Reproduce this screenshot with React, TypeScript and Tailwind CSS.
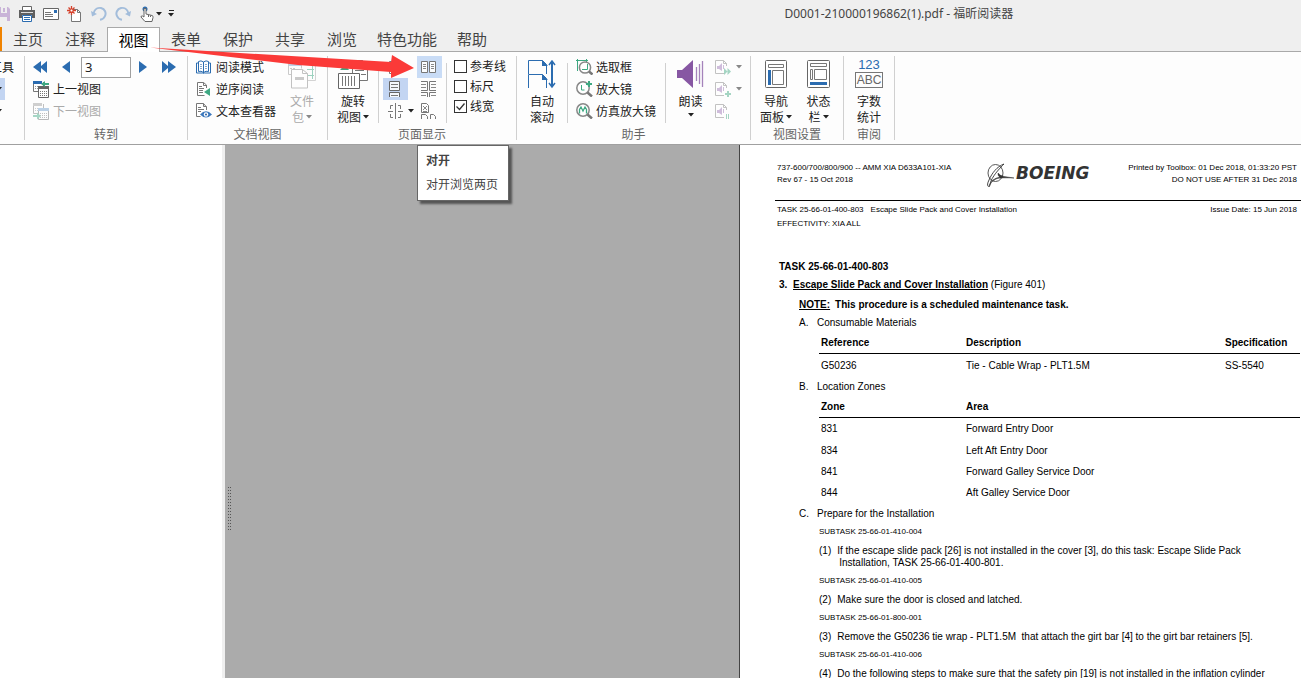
import type { ReactNode } from "react";

type Box = { children: ReactNode; w: number; h: number; className?: string };

function Icon({ children, w, h, className = "" }: Box) {
  return (
    <svg
      width={w}
      height={h}
      viewBox={`0 0 ${w} ${h}`}
      fill="none"
      aria-hidden="true"
      className={`shrink-0 ${className}`}
    >
      {children}
    </svg>
  );
}

function Caret({ className = "text-[#222]" }: { className?: string }) {
  return (
    <Icon w={6} h={4} className={className}>
      <path d="M0 0h6L3 3.6z" fill="currentColor" />
    </Icon>
  );
}

/* ---------- quick access bar ---------- */

const SaveIcon = () => (
  <Icon w={10} h={16}>
    <path d="M0 1h8l2 2v12H0z" fill="#c9b4d8" />
    <path d="M0 1h7v6H0zM0 10h7v5H0z" fill="#efefef" />
    <path d="M0 1h1v6H0zM3 2h2v4H3zM0 10h7v1H0z" fill="#c9b4d8" />
  </Icon>
);

const PrintIcon = () => (
  <Icon w={16} h={16}>
    <path d="M3.500 4V.5h9V4" stroke="#666" fill="#fff" />
    <path d="M0 4h16v8h-3V9H3v3H0z" fill="#606060" />
    <path d="M2 6h12v1H2z" fill="#ddd" />
    <path d="M3.500 9.500h9v6h-9z" fill="#fff" stroke="#2b6cb0" />
    <path d="M5 11.500h6M5 13.500h6" stroke="#2b6cb0" />
  </Icon>
);

const MailIcon = () => (
  <Icon w={16} h={12}>
    <path d="M.5.5h15v11H.5z" fill="#fff" stroke="#666" />
    <path d="M11 2h3v3h-3z" fill="#2b6cb0" />
    <path d="M2 4.500h6M2 6.500h8M2 8.500h8" stroke="#777" />
  </Icon>
);

const NewIcon = () => (
  <Icon w={15} h={16}>
    <path d="M4.500 3.500h6l3 3v9h-9z" fill="#fff" stroke="#777" />
    <path d="M10.500 3.500v3h3" stroke="#777" />
    <path d="M4.500 0v9M0 4.500h9M1.500 1.500l6 6M7.500 1.500l-6 6" stroke="#d5412b" strokeWidth="1.300" />
    <circle cx="4.500" cy="4.500" r="1.500" fill="#fff" stroke="#d5412b" />
  </Icon>
);

const UndoIcon = ({ className = "" }: { className?: string }) => (
  <Icon w={16} h={15} className={className}>
    <path d="M2.500 7.500C3.500 3 7 1.500 10 2c4 1 5.500 5 4 8-1 2.500-3 3.500-5 3.700" stroke="#a3bddb" strokeWidth="2" />
    <path d="M0 5l1 5.500L6 8z" fill="#a3bddb" />
  </Icon>
);

const HandIcon = () => (
  <Icon w={14} h={16}>
    <circle cx="5" cy="3" r="2.500" fill="#2b6cb0" />
    <path d="M4 2.500h2V8l6 1.500q1.500.5 1 2L12 15.500H5L1 11q0-1.500 1.500-1L4 11z" fill="#fff" stroke="#666" />
    <path d="M8.500 9v2M10.500 9.500V11" stroke="#666" />
  </Icon>
);

/* ---------- ribbon icons ---------- */

const TriIcon = ({ double = false, className = "" }: { double?: boolean; className?: string }) => (
  <Icon w={double ? 14 : 8} h={12} className={className}>
    <path d={double ? "M0 0l6 5V0l8 6-8 6V7l-6 5z" : "M0 0l8 6-8 6z"} fill="#2b6cb0" />
  </Icon>
);

const ViewSheets = ({ next = false }: { next?: boolean }) => (
  <Icon w={16} h={17} className={next ? "opacity-45" : ""}>
    <path d="M.5 1v9.500h10V1" fill="#fff" stroke="#777" />
    <path d="M0 0h9v3H0z" fill={next ? "#999" : "#2b6cb0"} />
    <path d="M2 5.500h7M2 7.500h7" stroke="#999" strokeDasharray="1 1" />
    <path d="M5.500 6v10.500h10V6" fill="#fff" stroke="#666" />
    <path d="M5 5h11v3H5z" fill={next ? "#6d9ccd" : "#666"} />
    <path d="M7 10.500h7M7 12.500h7M7 14.500h7" stroke="#777" strokeDasharray="1 1" />
    {next ? (
      <path d="M0 12h4V9.500l4 3.500-4 3.500V14H0z" fill="#3ea882" />
    ) : (
      <path d="M16 2h-4V0L8 3l4 3V4h4z" fill="#3ea882" />
    )}
  </Icon>
);

const BookIcon = () => (
  <Icon w={16} h={14}>
    <path d="M7.500 2Q5 0 2.500 1.500v10Q5 10.500 7.500 12.500 10 10.500 12.500 11.500v-10Q10 0 7.500 2z" fill="#fff" stroke="#2b6cb0" />
    <path d="M7.500 2v11M2 3H.5v10h6l1 .5 1-.5h6V3H13" stroke="#2b6cb0" />
    <path d="M4 4.500h2M4 6.500h2M4 8.500h2M9 4.500h2M9 6.500h2M9 8.500h2" stroke="#88a9cc" />
  </Icon>
);

const ReverseIcon = () => (
  <Icon w={15} h={16}>
    <path d="M10.500 7V4L7.500 1.500h-6v13h7" fill="#fff" stroke="#777" />
    <path d="M7.500 1.500v3h3M3 5.500h3M3 7.500h5M3 9.500h4M3 11.500h4" stroke="#777" />
    <path d="M14 7v8l-6-4z" fill="#3ea882" />
  </Icon>
);

const ViewerIcon = () => (
  <Icon w={16} h={16}>
    <path d="M10.500 7V4L7.500.5h-7v13h4" fill="#fff" stroke="#777" />
    <path d="M7.500.5v3h3M2 4.500h3M2 6.500h6M2 8.500h3" stroke="#777" />
    <path d="M4 11.500q6-6.500 12 0-6 6-12 0z" fill="#3b78bd" />
    <circle cx="10" cy="11.500" r="2.200" fill="#fff" />
    <circle cx="10" cy="11.500" r="1" fill="#2b5f9e" />
  </Icon>
);

const PortfolioIcon = () => (
  <Icon w={28} h={29} className="opacity-50">
    <path d="M.5 2v12.500h8M.5 2.500h13v6" stroke="#999" />
    <path d="M1 4h12v2H1z" fill="#7fa8d4" />
    <path d="M2 8.500h6" stroke="#999" strokeDasharray="2 1" />
    <path d="M12 1.500h15.500v19H20" stroke="#aaa" />
    <path d="M19 9.500h7M24.500 3v16M19 15.500h7" stroke="#3ea882" />
    <path d="M3.500 9.500h11l5 4v14.500h-16z" fill="#fff" stroke="#888" />
    <path d="M14.500 9.500v4h5" stroke="#888" />
    <path d="M7 17h9v3H7z" fill="#999" />
  </Icon>
);

const RotateIcon = () => (
  <Icon w={30} h={30}>
    <path d="M14.500.5h10l5 5v15h-15z" fill="#fff" stroke="#777" />
    <path d="M24.500.5v5h5M17 10.500h9M23 14.500h5" stroke="#777" />
    <path d="M2 10h9L7 4.500z" fill="#3ea882" />
    <path d="M.5 13.500h21v15H.5z" fill="#fff" stroke="#666" />
    <path d="M4.500 16v10M7.500 16v10M10.500 16v10M13.500 16v10M16.500 16v10" stroke="#777" />
  </Icon>
);

const SinglePage = () => (
  <Icon w={13} h={16}>
    <path d="M.5 2.500h10v12H.5z" fill="#fff" stroke="#777" />
    <path d="M3 6.500h5M3 9.500h5" stroke="#999" />
  </Icon>
);

const ScrollPage = () => (
  <Icon w={13} h={16}>
    <path d="M.5.5h10v9H.5zM.5 16v-4.500h10V16" fill="#f4f7fc" stroke="#666" />
    <path d="M2 3.500h7M2 6.500h7M2 14.500h7" stroke="#777" />
  </Icon>
);

const SplitPage = () => (
  <Icon w={15} h={16}>
    <path d="M5 2.500H2.500V6M10 2.500h2.500V6M5 14.500H2.500V11M10 14.500h2.500V11M7.500 0v16M0 8.500h5M10 8.500h5" stroke="#777" />
  </Icon>
);

const FacingIcon = () => (
  <Icon w={17} h={12}>
    <path d="M.5.5h6v11h-6zM8.500.5h6v11h-6z" fill="#fbfdff" stroke="#777" />
    <path d="M2 3.500h3M2 5.500h3M2 7.500h3M10 3.500h3M10 5.500h3M10 7.500h3" stroke="#888" />
  </Icon>
);

const FacingScroll = () => (
  <Icon w={17} h={16}>
    <path d="M0 .5h6.500v9H0M15 .5H8.500v9H15M0 11.500h6.500V16M15 11.500H8.500V16" stroke="#777" />
    <path d="M0 3.500h5M0 6.500h5M10 3.500h5M10 6.500h5M0 14.500h5M10 14.500h5" stroke="#888" />
  </Icon>
);

const CoverFacing = () => (
  <Icon w={17} h={16}>
    <path d="M.5 9.500v-9h5l2 2v7zM.5 16v-4.500h4l2 2V16M9.500 16v-4.500h3l2 2V16" stroke="#777" />
    <path d="M2 3l4 4M6 3L2 7M2 8.500h4" stroke="#888" />
  </Icon>
);

const AutoScroll = () => (
  <Icon w={28} h={29}>
    <path d="M.5 14V.5h14l4 4V14M.5 28V14.500h14l4 4V28" stroke="#2b6cb0" />
    <path d="M14 0v6h6zM14 14v6h6z" fill="#2b6cb0" />
    <path d="M24 2v24" stroke="#2b6cb0" strokeWidth="2" />
    <path d="M21 5l3-4 3 4M21 23l3 4 3-4" stroke="#2b6cb0" strokeWidth="1.500" />
  </Icon>
);

const Lens = ({ children }: { children: ReactNode }) => (
  <Icon w={17} h={16}>
    <circle cx="7" cy="7" r="6.200" fill="#fff" stroke="#888" strokeWidth="1.500" />
    <path d="M11.500 11.500l4.500 4" stroke="#777" strokeWidth="2.500" />
    {children}
  </Icon>
);

const MarqueeIcon = () => (
  <Icon w={17} h={16}>
    <path d="M1.500 0v12M0 1.500h12M10.500 0v3" stroke="#3ea882" />
    <circle cx="9" cy="8.500" r="5.600" fill="#fff" stroke="#888" strokeWidth="1.500" />
    <path d="M6 10.500h5.500V5" stroke="#3ea882" />
    <path d="M13 12.500l3.500 3" stroke="#777" strokeWidth="2.500" />
  </Icon>
);

const SpeakerIcon = () => (
  <Icon w={27} h={28}>
    <path d="M0 10h5L16 0v28L5 18H0z" fill="#8757a3" />
    <path d="M19.500 7v14M22.500 4v20M25.500 1v26" stroke="#a583bb" strokeWidth="1.300" />
  </Icon>
);

const SpeakFile = ({ kind }: { kind: "forward" | "plus" | "pause" }) => (
  <Icon w={16} h={15} className="opacity-50">
    <path d="M11.500 6V3.500L8.500.5h-8v13H9" fill="#fff" stroke="#888" />
    <path d="M8.500.5v3h3" stroke="#888" />
    <path d="M2 6h2l3-3v8L4 9H2z" fill="#a37fba" />
    <path d="M8.500 5v4" stroke="#a37fba" />
    {kind === "forward" && <path d="M9 8l3.500 3.500L9 15zM12.500 8l3.500 3.500-3.500 3.500z" fill="#4fae8b" />}
    {kind === "plus" && <path d="M10 12h6M13 9v6" stroke="#4fae8b" strokeWidth="2" />}
    {kind === "pause" && <path d="M11.500 10v5M13.500 10v5" stroke="#4fae8b" />}
  </Icon>
);

const NavPanel = () => (
  <Icon w={22} h={28}>
    <rect x=".5" y=".5" width="21" height="27" rx="1" fill="#fff" stroke="#666" />
    <path d="M3.500 4.500h15v3h-15zM7.500 10.500h11v14h-11z" stroke="#777" />
    <path d="M3 10h3v15H3z" fill="#2b6cb0" />
  </Icon>
);

const StatusPanel = () => (
  <Icon w={23} h={28}>
    <rect x=".5" y=".5" width="22" height="27" rx="1" fill="#fff" stroke="#666" />
    <path d="M3.500 3.500h16v3h-16zM3.500 9.500h2v10h-2zM7.500 9.500h12v10h-12z" stroke="#777" />
    <path d="M3 22h17v3H3z" fill="#2b6cb0" />
  </Icon>
);

/* ---------- ribbon building blocks ---------- */

function Group({ label, className = "", children }: { label: string; className?: string; children: ReactNode }) {
  return (
    <section aria-label={label} className={`flex shrink-0 flex-col ${className}`}>
      <div className="flex h-[70px]">{children}</div>
      <div className="h-4 text-center text-xs leading-4 text-[#666]">{label}</div>
    </section>
  );
}

const GroupRule = () => <div className="h-[84px] w-px shrink-0 bg-[#d0d0d0]" />;
const Rule = () => <div className="mt-[7px] h-[60px] w-px shrink-0 bg-[#d0d0d0]" />;

function SmallButton({ icon, children, disabled = false }: { icon: ReactNode; children: ReactNode; disabled?: boolean }) {
  return (
    <button
      type="button"
      disabled={disabled}
      className="flex h-[22px] items-center gap-[3px] text-xs whitespace-nowrap text-[#222] disabled:text-[#aaa]"
    >
      <span className="flex w-[17px]">{icon}</span>
      {children}
    </button>
  );
}

function BigButton({
  icon,
  lines,
  caret = false,
  disabled = false,
  className = "",
}: {
  icon: ReactNode;
  lines: string[];
  caret?: boolean;
  disabled?: boolean;
  className?: string;
}) {
  return (
    <button
      type="button"
      disabled={disabled}
      className={`flex flex-col items-center pt-1 text-xs leading-4 text-[#222] disabled:text-[#aaa] ${className}`}
    >
      <span className="flex h-[33px] items-start">{icon}</span>
      {lines.map((line, i) => (
        <span key={line} className="flex h-4 items-center gap-0.5">
          {line}
          {caret && i === lines.length - 1 && (
            <Caret className={disabled ? "text-[#888]" : "text-[#222]"} />
          )}
        </span>
      ))}
    </button>
  );
}

function PageMode({ label, tone = "", children }: { label: string; tone?: string; children: ReactNode }) {
  return (
    <button type="button" aria-label={label} className={`flex h-[22px] w-[25px] items-center justify-center ${tone}`}>
      {children}
    </button>
  );
}

function Check({ label, checked = false }: { label: string; checked?: boolean }) {
  return (
    <label className="flex h-5 items-center gap-[3px] text-xs text-[#222]">
      <span className="relative flex">
        <input
          type="checkbox"
          defaultChecked={checked}
          className="peer size-[13px] appearance-none border border-[#333] bg-white"
        />
        <svg
          viewBox="0 0 13 13"
          fill="none"
          aria-hidden="true"
          className="pointer-events-none absolute inset-0 hidden size-[13px] peer-checked:block"
        >
          <path d="M2.500 6.500l3 3 5-6" stroke="#333" strokeWidth="1.300" />
        </svg>
      </span>
      {label}
    </label>
  );
}

/* ---------- header ---------- */

const tabs = ["主页", "注释", "视图", "表单", "保护", "共享", "浏览", "特色功能", "帮助"];

function TitleBar() {
  return (
    <div className="relative flex h-[27px] items-center text-xs text-[#444]">
      <div className="flex items-center">
        <button type="button" aria-label="保存" className="w-[19px]"><SaveIcon /></button>
        <button type="button" aria-label="打印" className="w-6"><PrintIcon /></button>
        <button type="button" aria-label="邮件" className="w-6"><MailIcon /></button>
        <button type="button" aria-label="新建" className="w-6"><NewIcon /></button>
        <button type="button" aria-label="撤销" className="w-6"><UndoIcon /></button>
        <button type="button" aria-label="重做" className="w-[25px]"><UndoIcon className="-scale-x-100" /></button>
        <button type="button" aria-label="手型工具" className="flex w-7 items-center gap-0.5">
          <HandIcon />
          <Caret />
        </button>
        <button type="button" aria-label="自定义" className="flex flex-col items-center gap-0.5">
          <span className="h-px w-[5px] bg-[#222]" />
          <Caret />
        </button>
      </div>
      <h1 className="absolute inset-y-0 left-1/2 flex items-center pl-[134px] whitespace-nowrap">
        D0001-210000196862(1).pdf - 福昕阅读器
      </h1>
    </div>
  );
}

function Tabs() {
  return (
    <nav className="flex h-[25px] border-b border-[#a9a9a9] text-[15px] text-[#444]">
      <div className="w-0.5 bg-[#f08300]" />
      {tabs.map((t) => (
        <button
          key={t}
          type="button"
          className={
            t === "视图"
              ? "-mb-px ml-px h-[25px] w-[53px] border border-b-0 border-[#a9a9a9] bg-white text-black"
              : t.length > 2
                ? "w-[78px]"
                : "w-[52px]"
          }
        >
          {t}
        </button>
      ))}
    </nav>
  );
}

function Ribbon() {
  return (
    <div className="flex h-[93px] overflow-hidden border-b border-[#a0a0a0] bg-[#fdfdfd] pt-1 font-['Noto_Sans_CJK_SC','Noto_Sans',sans-serif]">
      <div className="flex w-6 shrink-0 flex-col items-start">
        <div className="flex h-[22px] w-[14px] items-center justify-end overflow-hidden text-xs whitespace-nowrap text-[#222]">
          工具
        </div>
        <div className="flex h-[22px] w-[5px] items-center justify-end overflow-hidden bg-[#c3d5f2] pr-[3px]"><Caret /></div>
        <div className="flex h-[22px] w-[5px] items-center justify-end overflow-hidden pr-[3px]"><Caret /></div>
      </div>
      <GroupRule />

      <Group label="转到" className="w-[162px]">
        <div className="flex flex-col pl-2">
          <div className="flex h-[22px] items-center">
            <button type="button" aria-label="首页" className="w-[29px]"><TriIcon double className="-scale-x-100" /></button>
            <button type="button" aria-label="上一页" className="w-[19px]"><TriIcon className="-scale-x-100" /></button>
            <input
              aria-label="页码"
              defaultValue="3"
              className="h-[21px] w-[50px] border border-[#a0a0a0] bg-white px-[3px] font-['Noto_Sans'] text-[13px] text-[#222]"
            />
            <button type="button" aria-label="下一页" className="w-[31px] pl-2"><TriIcon /></button>
            <button type="button" aria-label="末页"><TriIcon double /></button>
          </div>
          <SmallButton icon={<ViewSheets />}>上一视图</SmallButton>
          <SmallButton icon={<ViewSheets next />} disabled>下一视图</SmallButton>
        </div>
      </Group>
      <GroupRule />

      <Group label="文档视图" className="w-[139px]">
        <div className="w-[92px] pl-2">
          <SmallButton icon={<BookIcon />}>阅读模式</SmallButton>
          <SmallButton icon={<ReverseIcon />}>逆序阅读</SmallButton>
          <SmallButton icon={<ViewerIcon />}>文本查看器</SmallButton>
        </div>
        <BigButton icon={<PortfolioIcon />} lines={["文件", "包"]} caret disabled className="ml-2" />
      </Group>
      <GroupRule />

      <Group label="页面显示" className="w-[188px]">
        <BigButton icon={<RotateIcon />} lines={["旋转", "视图"]} caret className="w-[50px]" />
        <Rule />
        <div className="ml-1 flex w-[34px] flex-col">
          <PageMode label="单页"><SinglePage /></PageMode>
          <PageMode label="连续" tone="bg-[#c3d5f2]"><ScrollPage /></PageMode>
          <div className="flex items-center">
            <PageMode label="拆分"><SplitPage /></PageMode>
            <Caret />
          </div>
        </div>
        <div className="mr-1 flex flex-col">
          <PageMode label="对开" tone="bg-[#c9dcf6]"><FacingIcon /></PageMode>
          <PageMode label="连续对开"><FacingScroll /></PageMode>
          <PageMode label="独立封面"><CoverFacing /></PageMode>
        </div>
        <Rule />
        <div className="flex flex-col pl-[7px]">
          <Check label="参考线" />
          <Check label="标尺" />
          <Check label="线宽" checked />
        </div>
      </Group>
      <GroupRule />

      <Group label="助手" className="w-[233px]">
        <BigButton icon={<AutoScroll />} lines={["自动", "滚动"]} className="w-[50px]" />
        <Rule />
        <div className="w-[97px] pl-2">
          <SmallButton icon={<MarqueeIcon />}>选取框</SmallButton>
          <SmallButton
            icon={
              <Lens>
                <path d="M5.500 4v5h3" stroke="#3ea882" />
                <path d="M10 3h6M13 0v6" stroke="#3ea882" strokeWidth="2" />
              </Lens>
            }
          >
            放大镜
          </SmallButton>
          <SmallButton
            icon={
              <Lens>
                <path d="M3.500 10.500v-4L5 4l2 4 2-4 1.500 2.500v4" stroke="#3ea882" strokeWidth="1.300" />
              </Lens>
            }
          >
            仿真放大镜
          </SmallButton>
        </div>
        <Rule />
        <button type="button" className="flex w-[49px] flex-col items-center pt-1 text-xs leading-4 text-[#222]">
          <span className="h-[33px]"><SpeakerIcon /></span>
          <span className="h-5">朗读</span>
          <Caret />
        </button>
        <div className="flex flex-col">
          <button type="button" aria-label="朗读文件" className="flex h-[22px] items-center gap-[5px]">
            <SpeakFile kind="forward" /><Caret className="text-[#888]" />
          </button>
          <button type="button" aria-label="添加朗读" className="flex h-[22px] items-center gap-[5px]">
            <SpeakFile kind="plus" /><Caret className="text-[#888]" />
          </button>
          <button type="button" aria-label="暂停朗读" className="flex h-[22px] items-center">
            <SpeakFile kind="pause" />
          </button>
        </div>
      </Group>
      <GroupRule />

      <Group label="视图设置" className="w-[92px]">
        <BigButton icon={<NavPanel />} lines={["导航", "面板"]} caret className="w-[50px]" />
        <BigButton icon={<StatusPanel />} lines={["状态", "栏"]} caret className="w-[35px]" />
      </Group>
      <GroupRule />

      <Group label="审阅" className="w-[50px]">
        <BigButton
          icon={
            <span className="-mt-0.5 flex flex-col items-center font-['Liberation_Sans']">
              <span className="text-[13px] leading-[14px] text-[#2b6cb0]">123</span>
              <span className="flex h-4 w-7 items-center justify-center border border-[#777] text-xs leading-[14px] text-[#666]">
                ABC
              </span>
            </span>
          }
          lines={["字数", "统计"]}
          className="w-[50px]"
        />
      </Group>
      <GroupRule />
    </div>
  );
}

/* ---------- document page ---------- */

function Step({ n, children }: { n: number; children: ReactNode }) {
  return (
    <p className="flex gap-[6px] pl-[79px] leading-3">
      <span>({n})</span>
      <span className="whitespace-nowrap">{children}</span>
    </p>
  );
}

const Subtask = ({ children }: { children: ReactNode }) => (
  <p className="mt-1.5 mb-[7px] pl-[79px] text-[8px] leading-3">{children}</p>
);

const Heading = ({ letter, children }: { letter: string; children: ReactNode }) => (
  <h3 className="flex pl-[59px] leading-3">
    <span className="w-[18px]">{letter}.</span>
    {children}
  </h3>
);

const zones = [
  ["831", "Forward Entry Door"],
  ["834", "Left Aft Entry Door"],
  ["841", "Forward Galley Service Door"],
  ["844", "Aft Galley Service Door"],
];

function BoeingLogo() {
  return (
    <div className="flex h-6 items-start text-[#333]">
      <Icon w={30} h={26}>
        <ellipse cx="9.500" cy="10" rx="7.500" ry="8.500" stroke="#444" strokeWidth=".9" />
        <path d="M3.500 23.500C1 24 1 21 3 17 6 10 11 3.500 18 1 15 4 8 11 5 18c-1 2.500-1 4.500-1.500 5.500z" stroke="#333" strokeWidth=".9" />
        <path d="M3 23q2.500-5.500 8-7.500 4-1 17-.5L18 13.500q-4-.7-6-3.500-.5 3 2 4.200Q6 15 3 23z" fill="#333" stroke="#333" strokeWidth=".5" />
      </Icon>
      <span className="font-['DejaVu_Sans'] text-[17px] leading-5 font-bold italic">BOEING</span>
    </div>
  );
}

function DocumentPage() {
  return (
    <article className="w-[562px] shrink-0 overflow-hidden border-l border-[#444] bg-white font-['Liberation_Sans',Arial,sans-serif] text-[10px] text-black">
      <header className="pl-[35px] text-[8px] leading-3">
        <div className="flex h-[56px] items-start justify-between border-b border-black pr-1 pl-0.5">
          <div className="pt-[17px]">
            <p>737-600/700/800/900 -- AMM XIA D633A101-XIA</p>
            <p>Rev 67 - 15 Oct 2018</p>
          </div>
          <div className="pt-[18px] pr-1"><BoeingLogo /></div>
          <div className="pt-[17px] text-right">
            <p>Printed by Toolbox: 01 Dec 2018, 01:33:20 PST</p>
            <p>DO NOT USE AFTER 31 Dec 2018</p>
          </div>
        </div>
        <div className="flex justify-between pt-[3px] pr-1 pl-0.5">
          <p><span className="mr-[7px]">TASK 25-66-01-400-803</span>Escape Slide Pack and Cover Installation</p>
          <p>Issue Date: 15 Jun 2018</p>
        </div>
        <p className="pt-0.5 pl-0.5">EFFECTIVITY: XIA ALL</p>
      </header>

      <h2 className="mt-[31px] pl-[39px] leading-3 font-bold">TASK 25-66-01-400-803</h2>
      <p className="mt-1.5 flex pl-[39px] leading-3">
        <b className="w-[14px]">3.</b>
        <span><b className="underline">Escape Slide Pack and Cover Installation</b> (Figure 401)</span>
      </p>
      <p className="mt-2 mb-1.5 pl-[59px] leading-3 font-bold">
        <span className="mr-[5px] underline">NOTE:</span>This procedure is a scheduled maintenance task.
      </p>
      <Heading letter="A">Consumable Materials</Heading>
      <table className="mt-[5px] ml-[79px] w-[481px] table-fixed border-collapse text-left leading-3">
        <thead>
          <tr className="h-[19px] border-b border-black">
            <th className="w-[145px] p-0 pl-0.5">Reference</th>
            <th className="p-0 pl-0.5">Description</th>
            <th className="w-[77px] p-0 pl-0.5">Specification</th>
          </tr>
        </thead>
        <tbody>
          <tr className="h-[25px]">
            <td className="p-0 pl-0.5">G50236</td>
            <td className="p-0 pl-0.5">Tie - Cable Wrap - PLT1.5M</td>
            <td className="p-0 pl-0.5">SS-5540</td>
          </tr>
        </tbody>
      </table>
      <div className="pt-[3px]"><Heading letter="B">Location Zones</Heading></div>
      <table className="mt-[5px] ml-[79px] w-[481px] table-fixed border-collapse text-left leading-3">
        <thead>
          <tr className="h-[19px] border-b border-black">
            <th className="w-[145px] p-0 pl-0.5">Zone</th>
            <th className="p-0 pl-0.5">Area</th>
          </tr>
        </thead>
        <tbody>
          {zones.map(([zone, area], i) => (
            <tr key={zone} className={i === 0 ? "h-[23px]" : "h-[21px]"}>
              <td className="p-0 pl-0.5">{zone}</td>
              <td className="p-0 pl-0.5">{area}</td>
            </tr>
          ))}
        </tbody>
      </table>
      <div className="pt-[5px]"><Heading letter="C">Prepare for the Installation</Heading></div>
      <Subtask>SUBTASK 25-66-01-410-004</Subtask>
      <Step n={1}>
        If the escape slide pack [26] is not installed in the cover [3], do this task: Escape Slide Pack
        <br />
        <span className="pl-0.5">Installation, TASK 25-66-01-400-801.</span>
      </Step>
      <Subtask>SUBTASK 25-66-01-410-005</Subtask>
      <Step n={2}>Make sure the door is closed and latched.</Step>
      <Subtask>SUBTASK 25-66-01-800-001</Subtask>
      <Step n={3}>
        Remove the G50236 tie wrap - PLT1.5M&nbsp; that attach the girt bar [4] to the girt bar retainers [5].
      </Step>
      <Subtask>SUBTASK 25-66-01-410-006</Subtask>
      <Step n={4}>Do the following steps to make sure that the safety pin [19] is not installed in the inflation cylinder</Step>
    </article>
  );
}

export default function App() {
  return (
    <div className="flex h-screen flex-col overflow-hidden bg-[#efefef] font-['Noto_Sans','Noto_Sans_CJK_SC',sans-serif]">
      <header className="relative z-10 shrink-0">
        <TitleBar />
        <Tabs />
        <Ribbon />
        <svg
          width="270"
          height="36"
          viewBox="0 0 270 36"
          aria-hidden="true"
          className="pointer-events-none absolute top-[46px] left-[148px]"
        >
          <path d="M2 1.500L243 16l1-7 22 13L243 32v-6L150 19z" fill="#fb3a38" />
        </svg>
        <div
          role="tooltip"
          className="absolute top-[145px] left-[417px] h-[56px] w-[92px] border border-[#666] bg-white pt-[7px] pl-2 text-xs text-[#444] shadow-[3px_3px_2px_#555]"
        >
          <p className="leading-4 font-bold">对开</p>
          <p className="mt-2 leading-4">对开浏览两页</p>
        </div>
      </header>
      <main className="flex min-h-0 flex-1 bg-[#ababab]">
        <aside className="w-[225px] shrink-0 border-r-3 border-[#efefef] bg-white" />
        <div className="flex flex-1 items-center pt-[194px]">
          <div className="ml-[3px] grid grid-cols-2 gap-x-px gap-y-0.5">
            {Array.from({ length: 30 }, (_, i) => (
              <span key={i} className="size-px bg-[#555]" />
            ))}
          </div>
        </div>
        <DocumentPage />
      </main>
    </div>
  );
}
